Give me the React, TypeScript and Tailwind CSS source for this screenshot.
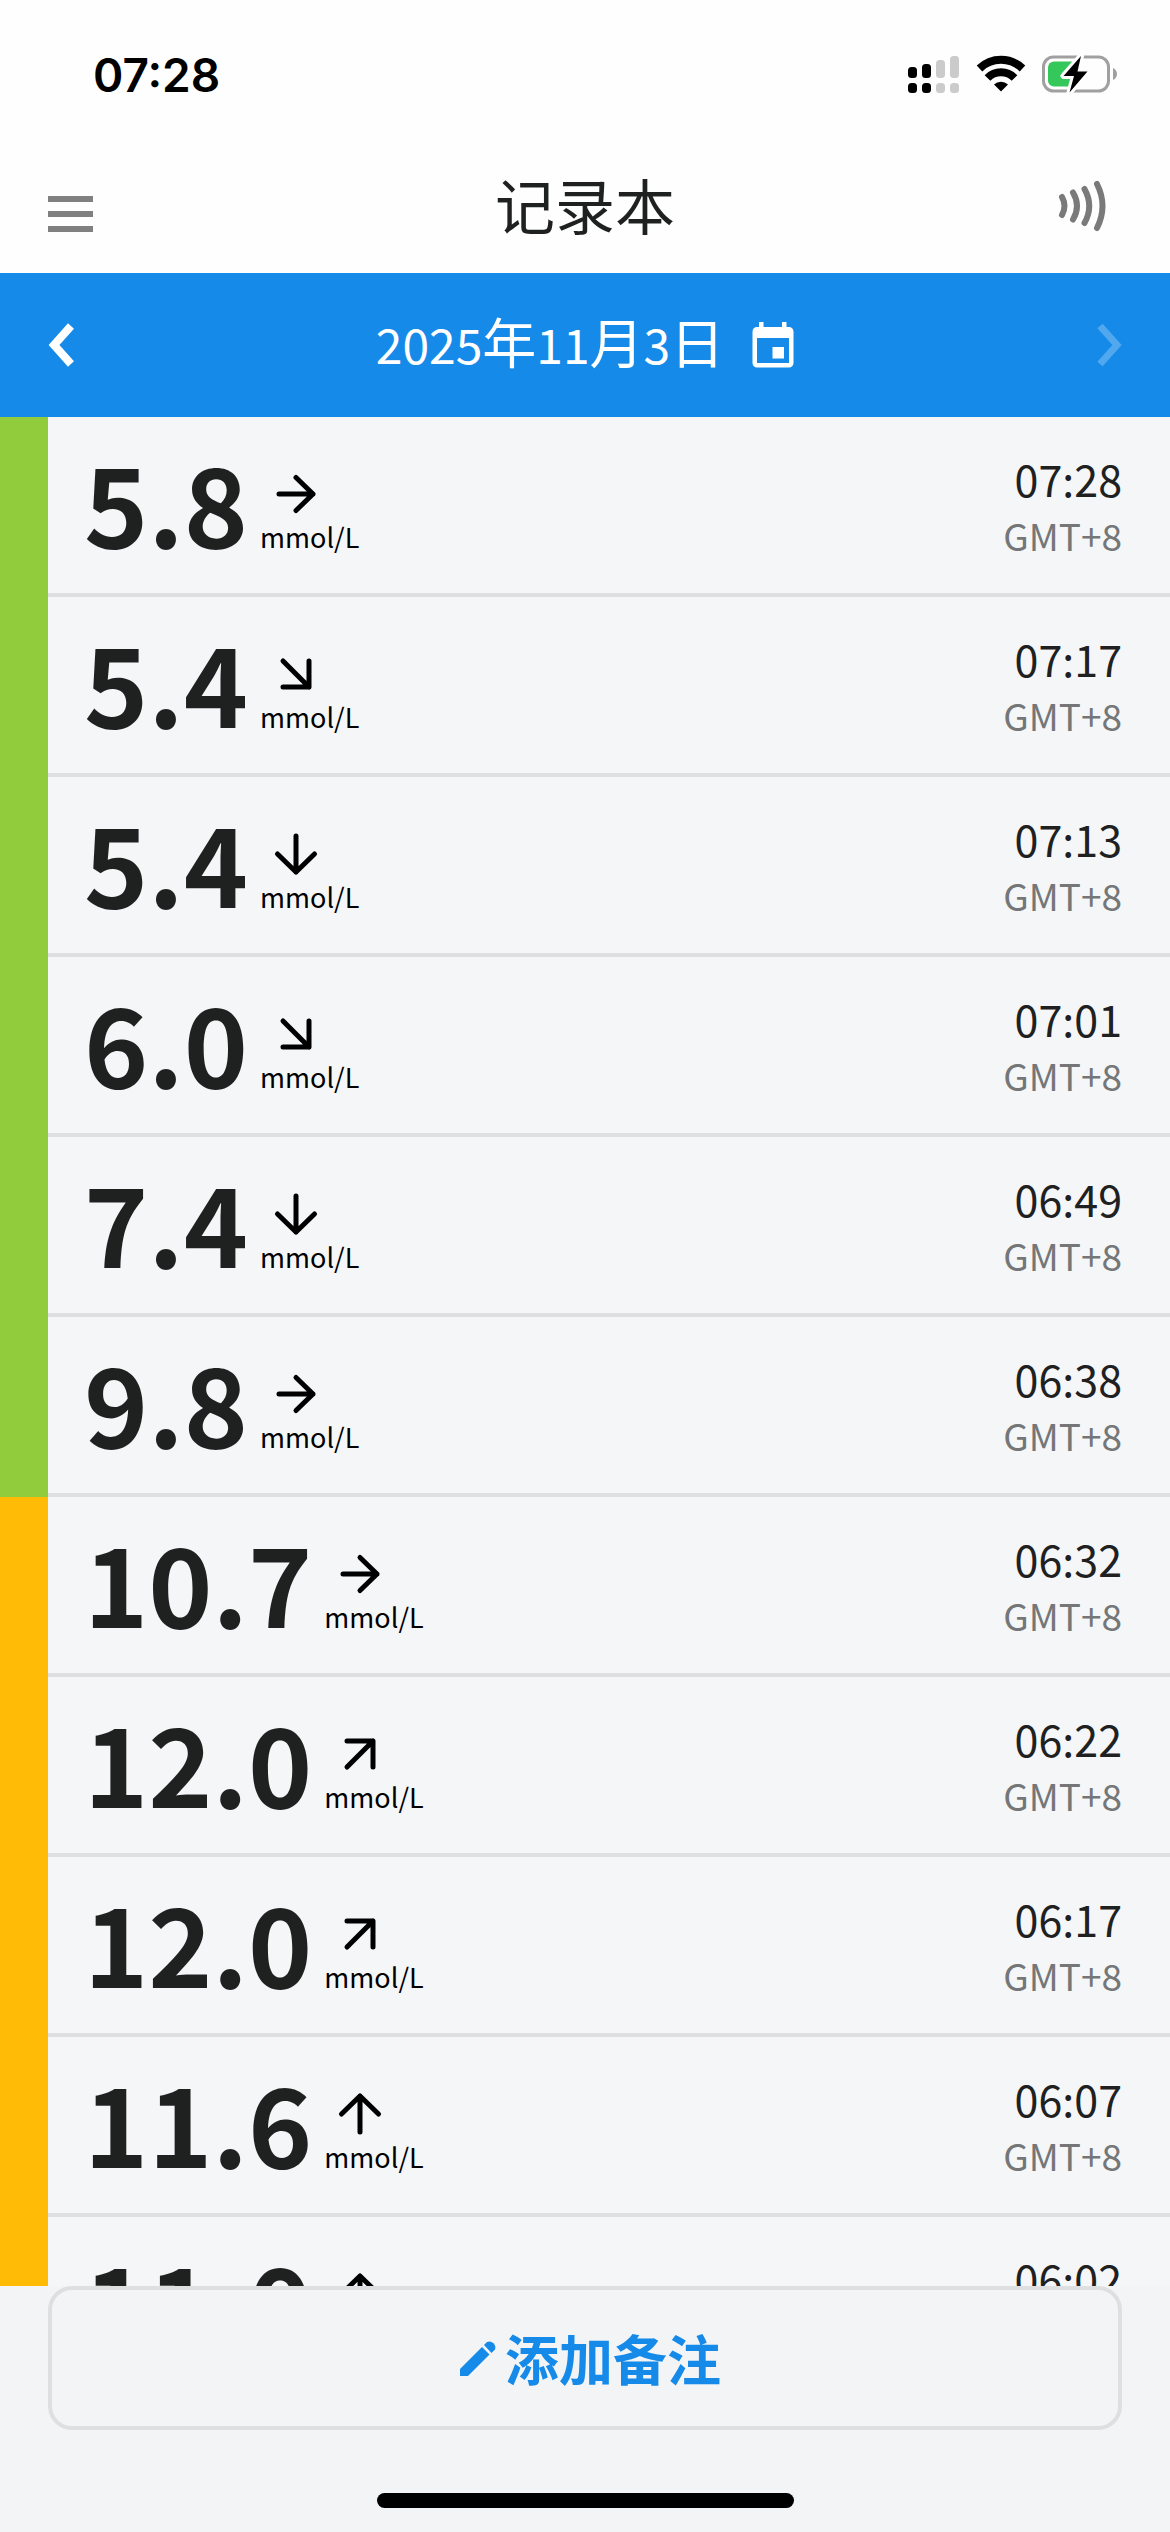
import React from "react";

type Trend = "right" | "downRight" | "down" | "upRight" | "up";
type Range = "in" | "high";

interface Reading {
  value: string;
  trend: Trend;
  time: string;
  range: Range;
}

const READINGS: Reading[] = [
  { value: "5.8", trend: "right", time: "07:28", range: "in" },
  { value: "5.4", trend: "downRight", time: "07:17", range: "in" },
  { value: "5.4", trend: "down", time: "07:13", range: "in" },
  { value: "6.0", trend: "downRight", time: "07:01", range: "in" },
  { value: "7.4", trend: "down", time: "06:49", range: "in" },
  { value: "9.8", trend: "right", time: "06:38", range: "in" },
  { value: "10.7", trend: "right", time: "06:32", range: "high" },
  { value: "12.0", trend: "upRight", time: "06:22", range: "high" },
  { value: "12.0", trend: "upRight", time: "06:17", range: "high" },
  { value: "11.6", trend: "up", time: "06:07", range: "high" },
  { value: "11.0", trend: "up", time: "06:02", range: "high" },
];

const RANGE_COLOR: Record<Range, string> = {
  in: "bg-[#90cc3c]",
  high: "bg-[#ffbb05]",
};

const TREND_PATH: Record<Trend, string> = {
  right: "M7 24H41M24 7.500L41 24L24 40.500",
  downRight: "M11 11L37 37M37 11V37H11",
  down: "M24 6V42M5.500 24L24 42L42.500 24",
  upRight: "M11 37L37 11M11 11H37V37",
  up: "M24 42V6M5.500 24L24 6L42.500 24",
};

function TrendArrow({ trend }: { trend: Trend }) {
  return (
    <svg viewBox="0 0 48 48" className="ml-3 size-12 text-black" fill="none" stroke="currentColor" strokeWidth="5" strokeLinecap="round" strokeLinejoin="round" aria-hidden="true">
      <path d={TREND_PATH[trend]} />
    </svg>
  );
}

function StatusBar() {
  return (
    <div className="flex h-[150px] items-center justify-between pr-[52px] pl-[93px] text-black">
      <time className="font-['Inter',sans-serif] text-[46px] leading-none font-semibold">07:28</time>
      <div className="flex items-center gap-4">
        <svg width="52" height="42" viewBox="0 0 52 42" aria-hidden="true">
          <g fill="#000">
            <rect x="0" y="13" width="9" height="11" rx="3.5" />
            <rect x="14" y="10" width="9" height="14" rx="3.5" />
            <rect x="0" y="29" width="9" height="10" rx="3.5" />
            <rect x="14" y="29" width="9" height="10" rx="3.5" />
          </g>
          <g fill="#cbcbcb">
            <rect x="28" y="6" width="9" height="18" rx="3.5" />
            <rect x="42" y="2" width="9" height="22" rx="3.5" />
            <rect x="28" y="29" width="9" height="10" rx="3.5" />
            <rect x="42" y="29" width="9" height="10" rx="3.5" />
          </g>
        </svg>
        <svg width="50" height="42" viewBox="0 0 50 42" aria-hidden="true">
          <path d="M3.500 14.500A31 31 0 0 1 46.500 14.500" fill="none" stroke="#000" strokeWidth="8" />
          <path d="M11.500 24A19 19 0 0 1 38.500 24" fill="none" stroke="#000" strokeWidth="8" />
          <path d="M25 37.500L18 30.500A10 10 0 0 1 32 30.500Z" fill="#000" />
        </svg>
        <svg width="76" height="42" viewBox="0 0 76 42" aria-hidden="true">
          <rect x="1.500" y="3" width="65" height="34" rx="10" fill="none" stroke="#a0a0a0" strokeWidth="3" />
          <path d="M71 14V26C73.500 25 75 22.600 75 20C75 17.400 73.500 15 71 14Z" fill="#a0a0a0" />
          <rect x="6" y="7.500" width="30" height="25" rx="6" fill="#34c759" />
          <path d="M39 2L21.500 22H32L27.500 38.500L45.500 17.500H35.500Z" fill="#000" stroke="#fff" strokeWidth="6" strokeLinejoin="round" paintOrder="stroke" />
        </svg>
      </div>
    </div>
  );
}

function TitleBar() {
  return (
    <header className="grid h-[123px] grid-cols-[1fr_auto_1fr] items-center px-12 pb-4">
      <button type="button" aria-label="菜单" className="mt-5 flex w-[45px] flex-col gap-[9px] justify-self-start">
        <span className="h-1.5 w-full bg-[#808080]" />
        <span className="h-1.5 w-full bg-[#808080]" />
        <span className="h-1.5 w-full bg-[#808080]" />
      </button>
      <h1 className="text-[60px] leading-[72px] text-[#1f2121]">记录本</h1>
      <button type="button" aria-label="扫描" className="mt-1 mr-3.5 justify-self-end text-[#7a7a7a]">
        <svg width="52" height="60" viewBox="0 0 52 60" fill="none" stroke="currentColor" strokeWidth="6" strokeLinecap="round" aria-hidden="true">
          <path d="M6 21Q11 30 6 39" />
          <path d="M17 16.500Q25 30 17 43.500" />
          <path d="M28.500 13Q38 30 28.500 47" />
          <path d="M41 8Q52 30 41 52" />
        </svg>
      </button>
    </header>
  );
}

function DateBar() {
  return (
    <nav className="flex h-36 items-center justify-between bg-[#158ae9] px-12 text-white">
      <button type="button" aria-label="前一天">
        <svg width="26" height="44" viewBox="0 0 26 44" fill="none" stroke="currentColor" strokeWidth="8" aria-hidden="true">
          <path d="M23 3L6 22L23 41" />
        </svg>
      </button>
      <button type="button" className="flex items-center gap-7">
        <span className="flex items-baseline pb-2 text-[54px] leading-[72px]">
          <span className="text-5xl">2025</span>年<span className="text-5xl">11</span>月<span className="text-5xl">3</span>日
        </span>
        <svg width="42" height="48" viewBox="0 0 42 48" aria-hidden="true">
          <path fill="currentColor" fillRule="evenodd" d="M7 1H11.500V6H30V1H34.500V6H37A4.500 4.500 0 0 1 41.500 10.500V42A4.500 4.500 0 0 1 37 46.500H5A4.500 4.500 0 0 1 .5 42V10.500A4.500 4.500 0 0 1 5 6H7ZM5 17V42H37V17ZM20.500 26H32V37.500H20.500Z" />
        </svg>
      </button>
      <button type="button" aria-label="后一天" disabled className="text-[#52a8ee]">
        <svg width="26" height="44" viewBox="0 0 26 44" fill="none" stroke="currentColor" strokeWidth="7" aria-hidden="true">
          <path d="M4 3L21 22L4 41" />
        </svg>
      </button>
    </nav>
  );
}

function ReadingRow({ reading }: { reading: Reading }) {
  return (
    <li className="flex h-[180px] shrink-0">
      <div className={`w-12 shrink-0 ${RANGE_COLOR[reading.range]}`} />
      <div className="flex flex-1 items-center justify-between border-b-4 border-[#dddfe1] pr-12 pl-9">
        <div className="flex items-center gap-3">
          <strong className="pb-2 text-[109px] leading-[160px] font-bold text-[#1f2121]">{reading.value}</strong>
          <div className="flex flex-col items-start pt-4">
            <TrendArrow trend={reading.trend} />
            <span className="text-[27px] leading-[38px] text-black">mmol/L</span>
          </div>
        </div>
        <div className="flex flex-col items-end pt-1">
          <time className="text-[43px] leading-[56px] text-[#1f2121]">{reading.time}</time>
          <span className="text-[37px] leading-[58px] text-[#747677]">GMT+8</span>
        </div>
      </div>
    </li>
  );
}

export default function App() {
  return (
    <div className="flex h-screen flex-col overflow-hidden bg-[#f2f4f6] font-['Noto_Sans_CJK_SC',sans-serif]">
      <div className="bg-[#fefefe]">
        <StatusBar />
        <TitleBar />
      </div>
      <DateBar />
      <main className="min-h-0 flex-1 overflow-hidden bg-[#f5f6f8]">
        <ul className="flex flex-col">
          {READINGS.map((reading) => (
            <ReadingRow key={reading.time} reading={reading} />
          ))}
        </ul>
      </main>
      <footer className="flex flex-col px-12 pb-6">
        <button type="button" className="flex h-36 items-center justify-center gap-2 rounded-3xl border-4 border-[#dddfe1] pl-2.5 text-[54px] leading-[72px] font-bold text-[#158ae9]">
          <svg width="38" height="42" viewBox="0 0 38 42" fill="currentColor" aria-hidden="true">
            <path d="M1 32L23 10L30.500 17.500L9 39H1Z" />
            <path d="M25 8L28 5A6 6 0 0 1 36 12.500L32.500 16Z" />
          </svg>
          添加备注
        </button>
        <div className="mt-[63px] h-[15px] w-[417px] self-center rounded-full bg-black" />
      </footer>
    </div>
  );
}
